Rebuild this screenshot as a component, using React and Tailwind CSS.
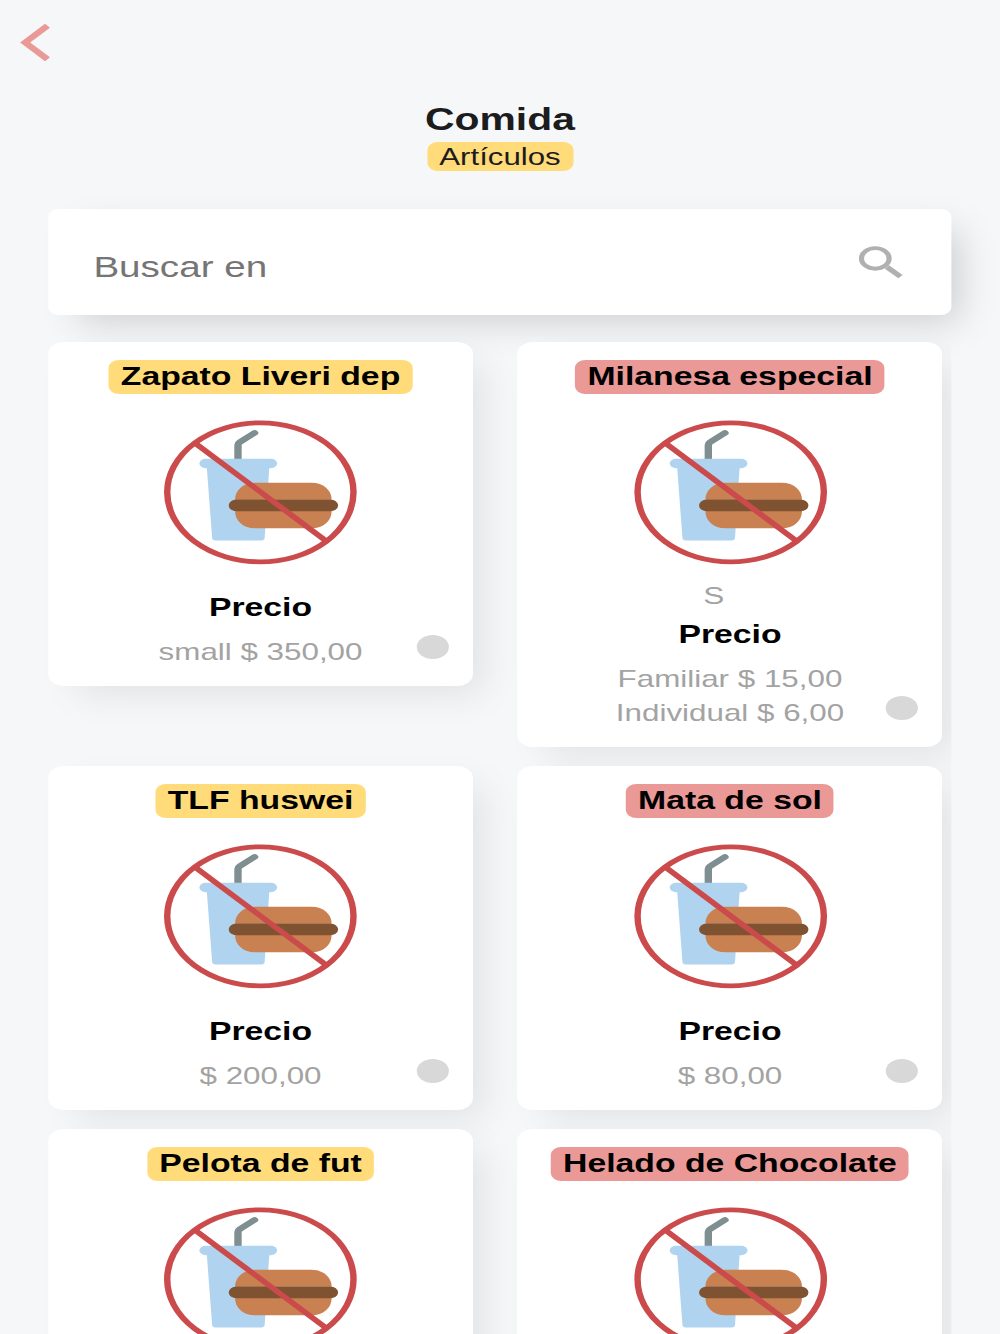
const items = [
  { name: "Zapato Liveri dep", prices: ["small $ 350,00"] },
  {
    name: "Milanesa especial",
    description: "S",
    prices: ["Familiar $ 15,00", "Individual $ 6,00"],
  },
  { name: "TLF huswei", prices: ["$ 200,00"] },
  { name: "Mata de sol", prices: ["$ 80,00"] },
  { name: "Pelota de fut" },
  { name: "Helado de Chocolate" },
];

const NoFoodIcon = () => (
  <svg viewBox="0 0.7 144 144" className="mt-[27px] h-[144px] w-[144px] shrink-0 overflow-visible">
    <path
      d="M55.6 40V24.6Q55.6 23 57 21.8L68 12.6"
      fill="none"
      stroke="#7f8e90"
      strokeWidth="5.5"
      strokeLinecap="round"
      strokeLinejoin="round"
    />
    <rect x="26.8" y="38.5" width="58" height="9.4" rx="4.7" fill="#b0d3f0" />
    <path
      d="M32.3 46.5H79L75.5 117.8Q75.4 120.2 73 120.2H38.8Q36.4 120.2 36.3 117.8Z"
      fill="#b0d3f0"
    />
    <path
      d="M53.4 79.4C53.4 70 59.4 62.5 68.4 62.5H110.4C119.4 62.5 125.5 70 125.5 79.4Z"
      fill="#ca8151"
    />
    <path
      d="M53.4 90.6C53.4 100.5 59.4 107.9 68.4 107.9H110.4C119.4 107.9 125.5 100.5 125.5 90.6Z"
      fill="#ca8151"
    />
    <rect x="48.7" y="79.2" width="81.6" height="11.7" rx="5.8" fill="#7f5231" />
    <path d="M23.2 22.5L121.4 120.7" stroke="#cb4a4b" strokeWidth="4.9" />
    <circle cx="72.3" cy="72" r="69.5" fill="none" stroke="#cb4a4b" strokeWidth="4.8" />
  </svg>
);

const ItemCard = ({ item, highlight }) => (
  <div className="relative flex min-h-[344px] flex-col items-center rounded-xl bg-white pt-[17.5px] pb-[17.5px] shadow-[14px_14px_32px_-6px_rgba(0,0,0,0.085)]">
    <h2
      className={`h-[34px] rounded-lg px-[9px] text-[25.2px] leading-[33px] font-bold whitespace-nowrap text-black ${
        highlight ? "bg-[#ea9996]" : "bg-[#ffdb7a]"
      }`}
    >
      {item.name}
    </h2>
    <NoFoodIcon />
    {item.prices && (
      <>
        <div className="mt-[17px] text-[23.6px] leading-[27px] text-[#a3a3a3]">
          {item.description && <p className="pt-px pr-6 leading-[26px]">{item.description}</p>}
        </div>
        <h3 className="mt-[10px] text-[25.2px] leading-[30px] font-bold text-black">Precio</h3>
        <div className="mt-[13px] text-center text-[23.4px] leading-[34px] text-[#a3a3a3]">
          {item.prices.map((price) => (
            <p key={price}>{price}</p>
          ))}
        </div>
        <span className="absolute right-[18.2px] bottom-[27px] h-6 w-6 rounded-full bg-[#d8d8d8]" />
      </>
    )}
  </div>
);

const App = () => {
  return (
    <div className="h-[1334px] w-full overflow-hidden bg-[#f6f7f9] font-['Liberation_Sans',Arial,sans-serif]">
      {/* the whole screen is stretched sideways */}
      <div className="h-full w-[746.27px] origin-top-left scale-x-134">
        <header className="flex h-[209px] flex-col">
          <button type="button" aria-label="Volver" className="mt-[23px] ml-[15px] h-[39px] w-[23px]">
            <svg viewBox="0 0 23 39" className="h-[39px] w-[23px]">
              <path d="M0 19.5L18.6 0.7L22.3 4.7L7.5 19.5L22.3 34.3L18.6 38.3Z" fill="#ea9996" />
            </svg>
          </button>
          <div className="mt-[38.5px] flex flex-col items-center">
            <h1 className="text-[30.5px] leading-[36px] font-bold text-[#1c1c1e]">Comida</h1>
            <span className="mt-[5.5px] h-[28.5px] rounded-lg bg-[#ffdb7a] px-[9.3px] text-[23.3px] leading-[31px] text-[#1c1c1e]">
              Artículos
            </span>
          </div>
        </header>

        <div className="mx-[36.2px] flex h-[106px] justify-between rounded-lg bg-white pt-[36px] pr-[35.6px] pl-[33.5px] shadow-[14px_14px_32px_-8px_rgba(0,0,0,0.17)]">
          <span className="text-[28.8px] leading-[44px] text-[#757575]">Buscar en</span>
          <svg viewBox="0 0 34 34" className="h-[34px] w-[34px]">
            <circle cx="13.2" cy="13.4" r="10.3" fill="none" stroke="#b0b0b0" strokeWidth="3.9" />
            <path d="M21.9 22L32 31.6" stroke="#b0b0b0" strokeWidth="4.6" />
          </svg>
        </div>

        <main className="mr-[36.2px] grid grid-cols-[316.5px_316.8px] items-start gap-x-[33.7px] gap-y-[19px] overflow-x-clip pt-[27px] pl-[36.2px]">
          {items.map((item, i) => (
            <ItemCard key={item.name} item={item} highlight={i % 2 === 1} />
          ))}
        </main>
      </div>
    </div>
  );
};

export default App;
